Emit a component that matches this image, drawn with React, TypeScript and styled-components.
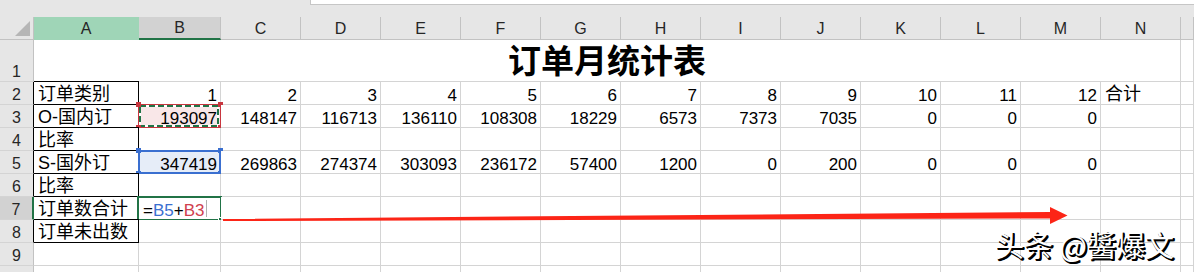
import React from 'react';
import styled, { createGlobalStyle, css } from 'styled-components';

const GRID = '#d4d4d4';
const HEAD_BG = '#e6e6e6';
const HEAD_LINE = '#c2c2c2';
const GREEN = '#217346';
const REF_RED = '#c8363f';
const REF_BLUE = '#3a6fd0';
const SANS = `"Liberation Sans", "Noto Sans CJK SC", sans-serif`;
const CJK = `"Noto Sans CJK SC", "Liberation Sans", sans-serif`;

const GlobalStyle = createGlobalStyle`
  *, *::before, *::after { box-sizing: border-box; }
  html, body { margin: 0; padding: 0; background: #fff; width: 1194px; height: 272px; overflow: hidden; }
  #root { width: 1194px; height: 272px; overflow: hidden; }
`;

const Page = styled.div`
  position: relative;
  display: flex;
  flex-direction: column;
  width: 1194px;
  height: 272px;
  overflow: hidden;
  background: #fff;
  font-family: ${SANS};
`;

const TopStrip = styled.div`
  flex: 0 0 17px;
  display: flex;
  justify-content: flex-end;
  align-items: flex-start;
  background: ${HEAD_BG};
`;

const FormulaEdge = styled.div`
  width: 884px;
  height: 5px;
  background: #fff;
  border-left: 1px solid #c6c6c6;
  border-bottom: 1px solid #c6c6c6;
`;

const Sheet = styled.div`
  flex: 0 0 auto;
  display: grid;
  grid-template-columns: 34px 105px 82px repeat(12, 80px) 1fr;
  grid-template-rows: 23px 42px repeat(9, 23px);
`;

const Corner = styled.div`
  position: relative;
  background: ${HEAD_BG};
  border-right: 1px solid ${HEAD_LINE};
  border-bottom: 1px solid ${HEAD_LINE};
  &::after {
    content: '';
    position: absolute;
    right: 3px;
    bottom: 3px;
    width: 0;
    height: 0;
    border-left: 15px solid transparent;
    border-bottom: 15px solid #b6b6b6;
  }
`;

type HeadState = 'plain' | 'range' | 'active';

const ColHead = styled.div<{ $state: HeadState }>`
  display: flex;
  align-items: center;
  justify-content: center;
  padding-top: 1px;
  font-family: ${SANS};
  font-size: 16px;
  line-height: 1;
  color: #262626;
  background: ${HEAD_BG};
  border-right: 1px solid ${HEAD_LINE};
  border-bottom: 1px solid ${HEAD_LINE};
  ${(p) =>
    p.$state === 'range' &&
    css`
      background: #9fd5b7;
      border-right-color: #9fd5b7;
      border-bottom-color: #9fd5b7;
    `}
  ${(p) =>
    p.$state === 'active' &&
    css`
      background: #d2d2d2;
      border-bottom: 2px solid ${GREEN};
    `}
`;

const RowHead = styled.div<{ $edge?: boolean; $active?: boolean }>`
  display: flex;
  align-items: flex-end;
  justify-content: center;
  padding-bottom: 1px;
  font-family: ${SANS};
  font-size: 16px;
  line-height: 1;
  color: #262626;
  background: ${(p) => (p.$active ? '#d2d2d2' : HEAD_BG)};
  border-right: ${(p) =>
    p.$active ? `2px solid ${GREEN}` : `1px solid ${p.$edge ? '#000' : HEAD_LINE}`};
  border-bottom: 1px solid ${GRID};
`;

const TitleCell = styled.div`
  grid-column: span 14;
  display: flex;
  align-items: flex-end;
  justify-content: center;
  padding-bottom: 5px;
  font-family: ${CJK};
  font-weight: 700;
  font-size: 33px;
  line-height: 1;
  color: #000;
  border-right: 1px solid ${GRID};
  border-bottom: 1px solid ${GRID};
`;

type Fill = 'none' | 'pink' | 'blue';

const Cell = styled.div<{ $align?: 'left' | 'right'; $boxed?: boolean; $cjk?: boolean; $fill?: Fill }>`
  position: relative;
  display: flex;
  align-items: flex-end;
  justify-content: ${(p) => (p.$align === 'right' ? 'flex-end' : 'flex-start')};
  padding: 0 3px ${(p) => (p.$cjk ? '1px' : '0')} 4px;
  font-family: ${SANS};
  font-size: ${(p) => (p.$cjk ? '18px' : '17px')};
  line-height: 1;
  color: #000;
  white-space: nowrap;
  background: ${(p) => (p.$fill === 'pink' ? '#f9e7e8' : p.$fill === 'blue' ? '#e6edf8' : '#fff')};
  border-right: 1px solid ${(p) => (p.$boxed ? '#000' : GRID)};
  border-bottom: 1px solid ${(p) => (p.$boxed ? '#000' : GRID)};
  ${(p) =>
    p.$boxed &&
    css`
      box-shadow: 0 -1px 0 #000;
    `}
`;

const Frame = styled.span<{ $color: string; $width: number; $inset: string }>`
  position: absolute;
  inset: ${(p) => p.$inset};
  border: ${(p) => p.$width}px solid ${(p) => p.$color};
  pointer-events: none;
`;

const Handle = styled.span<{ $color: string; $h: 'left' | 'right'; $v: 'top' | 'bottom' }>`
  position: absolute;
  width: 5px;
  height: 5px;
  background: ${(p) => p.$color};
  ${(p) => p.$h}: -3px;
  ${(p) => p.$v}: -3px;
`;

const Ants = styled.svg`
  position: absolute;
  left: 0;
  top: 0;
  overflow: visible;
`;

const FillHandle = styled.span`
  position: absolute;
  right: -4px;
  bottom: -4px;
  width: 6px;
  height: 6px;
  background: ${GREEN};
  border: 1px solid #fff;
`;

const RefText = styled.span<{ $color: string }>`
  color: ${(p) => p.$color};
`;

const Caret = styled.span`
  align-self: stretch;
  width: 1px;
  margin: 3px 0 2px 2px;
  background: #b0b0b0;
`;

const Overlay = styled.svg`
  position: absolute;
  left: 0;
  top: 0;
  pointer-events: none;
`;

const Watermark = styled.div`
  position: absolute;
  left: 995px;
  top: 230px;
  font-family: ${CJK};
  font-size: 29px;
  line-height: 1;
  color: #fff;
  white-space: nowrap;
  text-shadow: 1px 1px 0 #000, 2px 2px 0 #000, 1px 2px 0 #000, 2px 1px 0 #000;
`;

const COLS = ['A', 'B', 'C', 'D', 'E', 'F', 'G', 'H', 'I', 'J', 'K', 'L', 'M', 'N'];

type BodyRow = { n: number; label: string; values?: (number | string)[]; boxed: boolean; hideNumber?: boolean };

const BODY: BodyRow[] = [
  { n: 2, label: '订单类别', values: [1, 2, 3, 4, 5, 6, 7, 8, 9, 10, 11, 12], boxed: true },
  {
    n: 3,
    label: 'O-国内订',
    values: [193097, 148147, 116713, 136110, 108308, 18229, 6573, 7373, 7035, 0, 0, 0],
    boxed: true,
  },
  { n: 4, label: '比率', boxed: true },
  {
    n: 5,
    label: 'S-国外订',
    values: [347419, 269863, 274374, 303093, 236172, 57400, 1200, 0, 200, 0, 0, 0],
    boxed: true,
  },
  { n: 6, label: '比率', boxed: true },
  { n: 7, label: '订单数合计', boxed: true },
  { n: 8, label: '订单未出数', boxed: true },
  { n: 9, label: '', boxed: false },
  { n: 10, label: '', boxed: false, hideNumber: true },
];

function CornerHandles({ color }: { color: string }) {
  return (
    <>
      <Handle $color={color} $h="left" $v="top" />
      <Handle $color={color} $h="right" $v="top" />
      <Handle $color={color} $h="left" $v="bottom" />
      <Handle $color={color} $h="right" $v="bottom" />
    </>
  );
}

function ValueCell({ row, index }: { row: BodyRow; index: number }) {
  const value = row.values ? row.values[index] : '';
  if (index === 0 && row.n === 3) {
    return (
      <Cell $align="right" $fill="pink">
        <Ants width="80" height="22">
          <rect x="1" y="1" width="78" height="20" fill="none" stroke="#fff" strokeWidth="2" />
          <rect
            x="1"
            y="1"
            width="78"
            height="20"
            fill="none"
            stroke={GREEN}
            strokeWidth="2"
            strokeDasharray="6 3"
          />
        </Ants>
        <Frame $color={REF_RED} $width={1} $inset="-1px" />
        <CornerHandles color={REF_RED} />
        {value}
      </Cell>
    );
  }
  if (index === 0 && row.n === 5) {
    return (
      <Cell $align="right" $fill="blue">
        <Frame $color={REF_BLUE} $width={2} $inset="-1px" />
        <CornerHandles color={REF_BLUE} />
        {value}
      </Cell>
    );
  }
  if (index === 0 && row.n === 7) {
    return (
      <Cell $align="left">
        <Frame $color={GREEN} $width={2} $inset="-1px -2px -2px -2px" />
        <FillHandle />
        =<RefText $color={REF_BLUE}>B5</RefText>+<RefText $color="#d0404e">B3</RefText>
        <Caret />
      </Cell>
    );
  }
  return <Cell $align="right">{value}</Cell>;
}

export default function App() {
  return (
    <>
      <GlobalStyle />
      <Page>
        <TopStrip>
          <FormulaEdge />
        </TopStrip>
        <Sheet>
          <Corner />
          {COLS.map((c) => (
            <ColHead key={c} $state={c === 'A' ? 'range' : c === 'B' ? 'active' : 'plain'}>
              {c}
            </ColHead>
          ))}
          <ColHead $state="plain" />

          <RowHead>1</RowHead>
          <TitleCell>订单月统计表</TitleCell>
          <Cell />

          {BODY.map((row) => (
            <React.Fragment key={row.n}>
              <RowHead $edge={row.boxed && row.n !== 7} $active={row.n === 7}>
                {row.hideNumber ? '' : row.n}
              </RowHead>
              <Cell $boxed={row.boxed} $cjk>
                {row.label}
              </Cell>
              {Array.from({ length: 12 }).map((_, i) => (
                <ValueCell key={i} row={row} index={i} />
              ))}
              <Cell $cjk>{row.n === 2 ? '合计' : ''}</Cell>
              <Cell />
            </React.Fragment>
          ))}
        </Sheet>
        <Overlay width="1194" height="272" viewBox="0 0 1194 272">
          <polygon
            points="223,219 1050,212 1050,207 1067.5,215.5 1050,224 1050,218.5 223,221"
            fill="#fc2517"
          />
        </Overlay>
        <Watermark>头条 @醬爆文</Watermark>
      </Page>
    </>
  );
}
